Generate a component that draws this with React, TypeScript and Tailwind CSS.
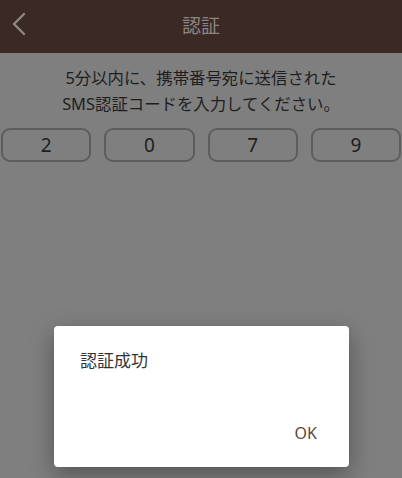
const digits = ["2", "0", "7", "9"];

export default function App() {
  return (
    <div
      className="relative h-[478px] w-[402px] overflow-hidden bg-[#7f7f7f]"
      style={{ fontFamily: '"Noto Sans", "Noto Sans CJK JP", sans-serif' }}
    >
      <header className="relative flex h-[53px] items-center justify-center bg-[#3a2925]">
        <button className="absolute left-[8px] top-[10px] text-[#8e8885]">
          <svg width="24" height="28" viewBox="0 0 24 28" fill="none">
            <polyline
              points="16,4 6,14 16,24"
              stroke="currentColor"
              strokeWidth="2.4"
              strokeLinecap="round"
              strokeLinejoin="round"
            />
          </svg>
        </button>
        <h1 className="text-[19px] text-[#8c8582]">認証</h1>
      </header>

      <p className="mt-[12px] text-center text-[16.4px] leading-[26px] text-[#1e1e1e]">
        5分以内に、携帯番号宛に送信された
        <br />
        SMS認証コードを入力してください。
      </p>

      <div className="mt-[11px] grid grid-cols-4 gap-[13px] px-[1px]">
        {digits.map((d, i) => (
          <div
            key={i}
            className="flex h-[34px] items-center justify-center rounded-[9px] border-2 border-[#5d5d5d] text-[19px] text-[#1e1e1e]"
          >
            {d}
          </div>
        ))}
      </div>

      <div className="absolute left-[54px] top-[326px] flex h-[141px] w-[295px] flex-col rounded-[4px] bg-white shadow-[0_8px_24px_rgba(0,0,0,0.35)]">
        <p className="ml-[26px] mt-[22px] text-[17px] text-[#333]">認証成功</p>
        <div className="flex-1" />
        <div className="mb-[22px] mr-[32px] flex justify-end">
          <span className="text-[16px] text-[#5a4640]">OK</span>
        </div>
      </div>
    </div>
  );
}
